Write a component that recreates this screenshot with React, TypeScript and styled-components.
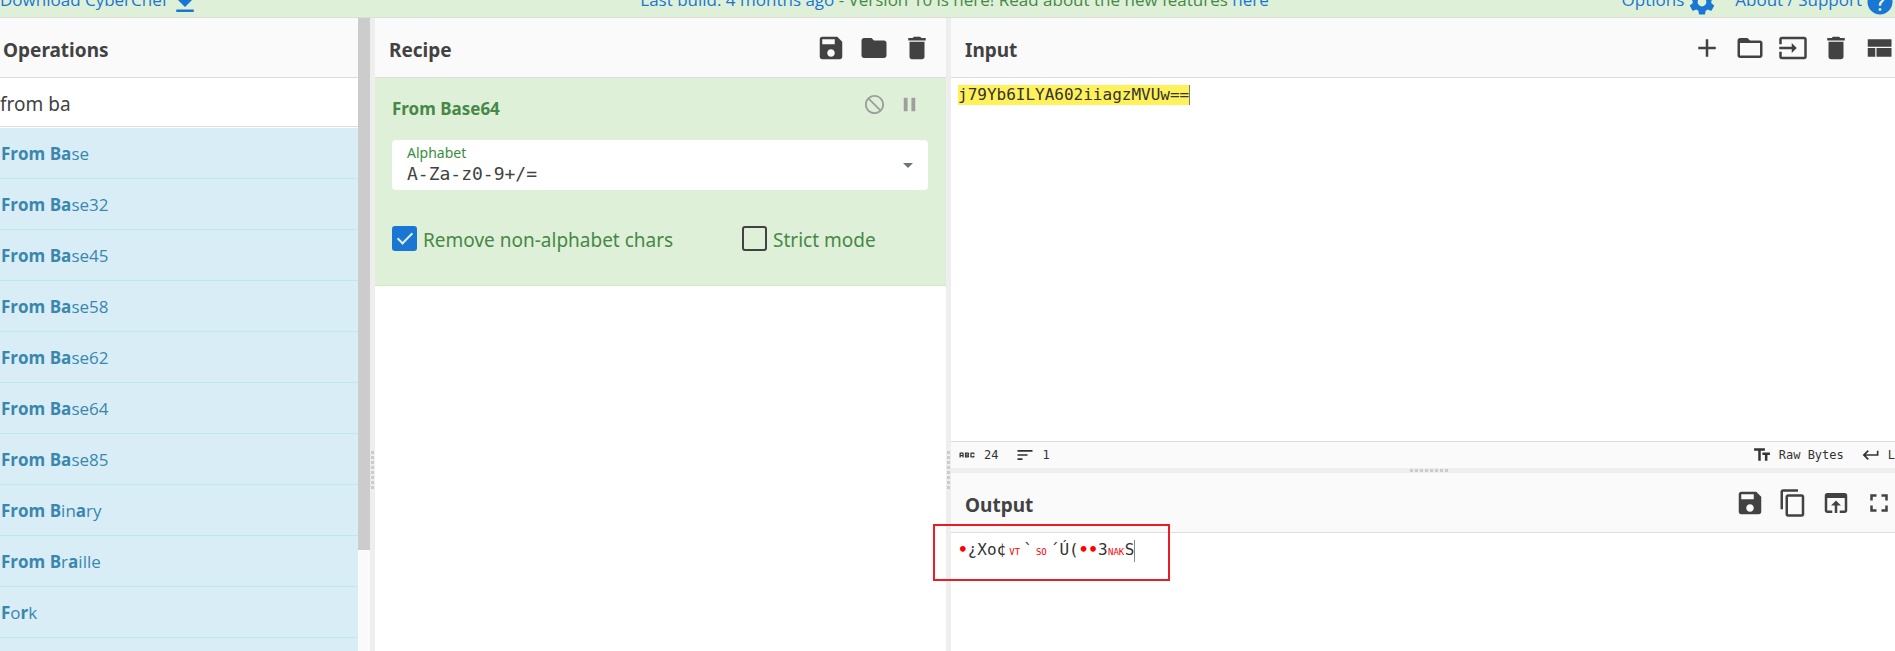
import React from "react";
import styled, { createGlobalStyle } from "styled-components";
import { MdAbc, MdTextFields } from "react-icons/md";

const SANS = `"Noto Sans", "Open Sans", sans-serif`;
const MONO = `"DejaVu Sans Mono", "Liberation Mono", monospace`;

const GlobalStyle = createGlobalStyle`
  *, *::before, *::after { box-sizing: border-box; }
  body { margin: 0; font-family: ${SANS}; color: #424242; background: #fff; }
  button, input, select { font: inherit; color: inherit; margin: 0; }
  a { color: #1976d2; text-decoration: none; }
`;

const PATHS = {
  download: "M19 9h-4V3H9v6H5l7 7 7-7zM5 18v2h14v-2z",
  settings:
    "M19.43 12.98c.04-.32.07-.64.07-.98s-.03-.66-.07-.98l2.11-1.65c.19-.15.24-.42.12-.64l-2-3.46c-.12-.22-.39-.3-.61-.22l-2.49 1c-.52-.4-1.08-.73-1.69-.98l-.38-2.65C14.46 2.18 14.25 2 14 2h-4c-.25 0-.46.18-.49.42l-.38 2.65c-.61.25-1.17.59-1.69.98l-2.49-1c-.23-.09-.49 0-.61.22l-2 3.46c-.13.22-.07.49.12.64l2.11 1.65c-.04.32-.07.65-.07.98s.03.66.07.98l-2.11 1.65c-.19.15-.24.42-.12.64l2 3.46c.12.22.39.3.61.22l2.49-1c.52.4 1.08.73 1.69.98l.38 2.65c.03.24.24.42.49.42h4c.25 0 .46-.18.49-.42l.38-2.65c.61-.25 1.17-.59 1.69-.98l2.49 1c.23.09.49 0 .61-.22l2-3.46c.12-.22.07-.49-.12-.64l-2.11-1.65zM12 15.5c-1.93 0-3.5-1.57-3.5-3.5s1.57-3.5 3.5-3.5 3.5 1.57 3.5 3.5-1.57 3.5-3.5 3.5z",
  help: "M12 2C6.48 2 2 6.48 2 12s4.48 10 10 10 10-4.48 10-10S17.52 2 12 2zm1 17h-2v-2h2v2zm2.07-7.75l-.9.92C13.45 12.9 13 13.5 13 15h-2v-.5c0-1.1.45-2.1 1.17-2.83l1.24-1.26c.37-.36.59-.86.59-1.41 0-1.1-.9-2-2-2s-2 .9-2 2H8c0-2.21 1.79-4 4-4s4 1.79 4 4c0 .88-.36 1.68-.93 2.25z",
  save: "M17 3H5c-1.11 0-2 .9-2 2v14c0 1.1.89 2 2 2h14c1.1 0 2-.9 2-2V7l-4-4zm-5 16c-1.66 0-3-1.34-3-3s1.34-3 3-3 3 1.34 3 3-1.34 3-3 3zm3-10H5V5h10v4z",
  folder:
    "M10 4H4c-1.1 0-1.99.9-1.99 2L2 18c0 1.1.9 2 2 2h16c1.1 0 2-.9 2-2V8c0-1.1-.9-2-2-2h-8l-2-2z",
  trash:
    "M6 19c0 1.1.9 2 2 2h8c1.1 0 2-.9 2-2V7H6v12zM19 4h-3.5l-1-1h-5l-1 1H5v2h14V4z",
  add: "M19 13h-6v6h-2v-6H5v-2h6V5h2v6h6v2z",
  folderOpen:
    "M20 6h-8l-2-2H4c-1.1 0-1.99.9-1.99 2L2 18c0 1.1.9 2 2 2h16c1.1 0 2-.9 2-2V8c0-1.1-.9-2-2-2zm0 12H4V8h16v10z",
  input:
    "M21 3.01H3c-1.1 0-2 .9-2 2V9h2V4.99h18v14.03H3V15H1v4.01c0 1.1.9 1.98 2 1.98h18c1.1 0 2-.88 2-1.98v-14c0-1.11-.9-2-2-2zM11 16l4-4-4-4v3H1v2h10v3z",
  layout: "M3 19h6v-7H3v7zm7 0h12v-7H10v7zM3 5v6h19V5H3z",
  copy: "M16 1H4c-1.1 0-2 .9-2 2v14h2V3h12V1zm3 4H8c-1.1 0-2 .9-2 2v14c0 1.1.9 2 2 2h11c1.1 0 2-.9 2-2V7c0-1.1-.9-2-2-2zm0 16H8V7h11v14z",
  openIn:
    "M19 4H5c-1.11 0-2 .9-2 2v12c0 1.1.89 2 2 2h4v-2H5V8h14v10h-4v2h4c1.1 0 2-.9 2-2V6c0-1.1-.89-2-2-2zm-7 6l-4 4h3v6h2v-6h3l-4-4z",
  fullscreen:
    "M7 14H5v5h5v-2H7v-3zm-2-4h2V7h3V5H5v5zm12 7h-3v2h5v-5h-2v3zM14 5v2h3v3h2V5h-5z",
  disable:
    "M12 2C6.48 2 2 6.48 2 12s4.48 10 10 10 10-4.48 10-10S17.52 2 12 2zm0 18c-4.42 0-8-3.58-8-8 0-1.85.63-3.55 1.69-4.9L16.9 18.31C15.55 19.37 13.85 20 12 20zm6.31-3.1L7.1 5.69C8.45 4.63 10.15 4 12 4c4.42 0 8 3.58 8 8 0 1.85-.63 3.55-1.69 4.9z",
  pause: "M6 19h4V5H6v14zm8-14v14h4V5h-4z",
  lines: "M3 18h6v-2H3v2zM3 6v2h18V6H3zm0 7h12v-2H3v2z",
  enter: "M19 7v4H5.83l3.58-3.59L8 6l-6 6 6 6 1.41-1.41L5.83 13H21V7z",
};
type IconName = keyof typeof PATHS;

const Svg = styled.svg`
  display: block;
  flex: none;
  fill: currentColor;
`;
const Icon = ({ name, size = 30 }: { name: IconName; size?: number }) => (
  <Svg width={size} height={size} viewBox="0 0 24 24" aria-hidden="true">
    <path d={PATHS[name]} />
  </Svg>
);

const Page = styled.div`
  display: flex;
  flex-direction: column;
  height: 100vh;
  overflow: hidden;
`;

const Banner = styled.header`
  display: grid;
  grid-template-columns: 1fr auto 1fr;
  grid-template-rows: 17px;
  align-items: end;
  flex: none;
  overflow: hidden;
  background: #dff0d8;
  border-bottom: 1px solid #ddd;
  color: #468847;
  font-family: "Open Sans", "Noto Sans", sans-serif;
  font-size: 17px;
  line-height: 20px;
  white-space: nowrap;
`;
const BannerLink = styled.a`
  display: flex;
  align-items: flex-end;
  gap: 3px;
`;
const BannerText = styled.span`
  padding-bottom: 7px;
`;
const BannerNotice = styled(BannerText)`
  padding-left: 14px;
`;
const BannerEnd = styled.div`
  display: flex;
  justify-content: flex-end;
  gap: 18px;
`;

const Workspace = styled.main`
  flex: 1;
  min-height: 0;
  display: grid;
  grid-template-columns:
    minmax(0, 358fr) 12px 5px minmax(0, 571fr) 5px
    minmax(0, 944fr);
`;

const Pane = styled.section<{ $grow?: number }>`
  display: flex;
  flex-direction: column;
  flex: ${(p) => p.$grow ?? 1} 1 0;
  min-width: 0;
  min-height: 0;
`;
const ClippedPane = styled(Pane)`
  overflow: hidden;
`;
const PaneHeader = styled.div<{ $left: number; $right: number }>`
  display: flex;
  align-items: center;
  justify-content: space-between;
  flex: none;
  height: 60px;
  padding: 0 ${(p) => p.$right}px 0 ${(p) => p.$left}px;
  background: #fafafa;
  border-bottom: 1px solid #ddd;
`;
const PaneTitle = styled.h2`
  margin: 0;
  padding-top: 4px;
  font-size: 19px;
  line-height: 24px;
  font-weight: 700;
`;
const Tools = styled.div<{ $gap: number }>`
  display: flex;
  gap: ${(p) => p.$gap}px;
`;
const IconButton = styled.button<{ $tone?: string }>`
  padding: 0;
  border: 0;
  background: none;
  color: ${(p) => p.$tone ?? "#424242"};
  cursor: pointer;
`;

const Search = styled.input`
  flex: none;
  width: 100%;
  height: 49px;
  padding: 4px 0 0;
  border: 0;
  border-bottom: 1px solid #ddd;
  outline: 0;
  background: #fff;
  font-size: 19px;
`;
const OperationList = styled.ul`
  margin: 1px 0 0;
  padding: 0;
  list-style: none;
`;
const Operation = styled.li`
  height: 51px;
  padding: 0 1px;
  background: #d9edf7;
  border-bottom: 1px solid #bce8f1;
  color: #3a87ad;
  font-family: "Open Sans", "Noto Sans", sans-serif;
  font-size: 17px;
  line-height: 52px;
  white-space: nowrap;
`;

const ScrollTrack = styled.div`
  background: #fafafa;
`;
const ScrollThumb = styled.div`
  height: 84%;
  background: #ccc;
`;

const Gutter = styled.div<{ $horizontal?: boolean }>`
  display: flex;
  flex: none;
  flex-direction: ${(p) => (p.$horizontal ? "row" : "column")};
  align-items: center;
  justify-content: ${(p) => (p.$horizontal ? "center" : "flex-start")};
  gap: 2px;
  min-height: 5px;
  padding: ${(p) => (p.$horizontal ? "0 0 0 12px" : "433px 0 0")};
  background: #eee;
`;
const Dot = styled.i`
  width: 3px;
  height: 3px;
  background: #ccc;
`;
const Divider = ({ horizontal }: { horizontal?: boolean }) => (
  <Gutter $horizontal={horizontal}>
    {Array.from({ length: 8 }, (_, i) => (
      <Dot key={i} />
    ))}
  </Gutter>
);

const RecipeCard = styled.article`
  display: flex;
  flex-direction: column;
  height: 208px;
  padding: 15px 18px 0 17px;
  background: #dff0d8;
  border-bottom: 1px solid #d0e9c0;
  color: #468847;
`;
const CardHead = styled.div`
  display: flex;
  align-items: flex-start;
  justify-content: space-between;
  height: 47px;
  padding-right: 7px;
`;
const CardTitle = styled.h3`
  margin: 0;
  padding-top: 4px;
  font-size: 17px;
  line-height: 24px;
`;
const Field = styled.div`
  display: flex;
  align-items: center;
  height: 50px;
  padding: 0 15px;
  background: #fff;
  border-radius: 4px;
`;
const FieldMain = styled.div`
  flex: 1;
  display: flex;
  flex-direction: column;
  padding-bottom: 3px;
`;
const FieldLabel = styled.label`
  font-size: 14px;
  line-height: 20px;
  color: #388e3c;
`;
const Select = styled.select`
  appearance: none;
  width: 100%;
  height: 21px;
  padding: 0;
  border: 0;
  outline: 0;
  background: transparent;
  color: #424242;
  font-family: ${MONO};
  font-size: 18px;
  line-height: 21px;
`;
const Checks = styled.div`
  display: grid;
  grid-template-columns: 350px 1fr;
  padding-top: 36px;
`;
const CheckLabel = styled.label`
  display: flex;
  align-items: flex-start;
  gap: 6px;
  font-size: 19px;
  line-height: 28px;
  white-space: nowrap;
`;
const Checkbox = styled.input`
  appearance: none;
  display: grid;
  place-items: center;
  width: 25px;
  height: 25px;
  border: 2px solid #424242;
  border-radius: 3px;
  &:checked {
    background: #1976d2;
    border-color: #1976d2;
  }
  &:checked::after {
    content: "";
    width: 8px;
    height: 15px;
    margin-bottom: 5px;
    border: solid #dff0d8;
    border-width: 0 2px 2px 0;
    transform: rotate(45deg);
  }
`;

const Code = styled.div`
  flex: 1;
  min-height: 0;
  padding: 7px;
  background: #fff;
  color: #333;
  font-family: ${MONO};
  font-size: 16px;
  line-height: 20px;
  white-space: pre;
`;
const Highlight = styled.mark`
  display: inline-block;
  background: #fff159;
  color: inherit;
  border-right: 1px solid #777;
`;
const OutputLine = styled.span`
  display: inline-block;
  border-right: 1px solid #888;
`;
const Control = styled.span`
  color: #f00;
  font-weight: 700;
`;
const ControlName = styled(Control)`
  display: inline-block;
  width: 17px;
  font-size: 9px;
  font-weight: 400;
  text-align: center;
`;

const StatusBar = styled.div`
  display: flex;
  align-items: center;
  justify-content: space-between;
  flex: none;
  height: 27px;
  padding: 0 0 0 6px;
  background: #fafafa;
  border-top: 1px solid #ddd;
  color: #333;
  font-family: ${MONO};
  font-size: 12px;
  line-height: 16px;
`;
const StatusGroup = styled.div`
  display: flex;
  gap: 17px;
`;
const StatusItem = styled.span`
  display: flex;
  align-items: center;
  gap: 7px;
`;

const OutputPane = styled(Pane)`
  position: relative;
`;
const Marker = styled.div`
  position: absolute;
  left: -18px;
  top: 51px;
  width: 237px;
  height: 57px;
  border: 2px solid #ed1c24;
`;

// Asterisks wrap the characters matched by the search box.
const OPERATIONS = [
  "*From Ba*se",
  "*From Ba*se32",
  "*From Ba*se45",
  "*From Ba*se58",
  "*From Ba*se62",
  "*From Ba*se64",
  "*From Ba*se85",
  "*From B*in*a*ry",
  "*From B*r*a*ille",
  "*F*o*r*k",
];

const Toolbar = ({ items }: { items: [IconName, string][] }) => (
  <Tools $gap={13}>
    {items.map(([name, label]) => (
      <IconButton key={label} type="button" aria-label={label}>
        <Icon name={name} />
      </IconButton>
    ))}
  </Tools>
);

export default function App() {
  return (
    <Page>
      <GlobalStyle />
      <Banner>
        <BannerLink href="#download">
          <BannerText>Download CyberChef</BannerText>
          <Icon name="download" />
        </BannerLink>
        <BannerNotice>
          <a href="#build">Last build: 4 months ago</a> - Version 10 is here!
          Read about the new features <a href="#features">here</a>
        </BannerNotice>
        <BannerEnd>
          <BannerLink href="#options">
            <BannerText>Options</BannerText>
            <Icon name="settings" />
          </BannerLink>
          <BannerLink href="#about">
            <BannerText>About / Support</BannerText>
            <Icon name="help" />
          </BannerLink>
        </BannerEnd>
      </Banner>

      <Workspace>
        <ClippedPane>
          <PaneHeader $left={3} $right={15}>
            <PaneTitle>Operations</PaneTitle>
          </PaneHeader>
          <Search
            type="text"
            aria-label="Search operations"
            defaultValue="from ba"
          />
          <OperationList>
            {OPERATIONS.map((op) => (
              <Operation key={op}>
                {op
                  .split("*")
                  .map((part, i) =>
                    i % 2 ? <b key={i}>{part}</b> : part
                  )}
              </Operation>
            ))}
            <Operation />
          </OperationList>
        </ClippedPane>
        <ScrollTrack>
          <ScrollThumb />
        </ScrollTrack>
        <Divider />

        <Pane>
          <PaneHeader $left={14} $right={14}>
            <PaneTitle>Recipe</PaneTitle>
            <Toolbar
              items={[
                ["save", "Save recipe"],
                ["folder", "Load recipe"],
                ["trash", "Clear recipe"],
              ]}
            />
          </PaneHeader>
          <RecipeCard>
            <CardHead>
              <CardTitle>From Base64</CardTitle>
              <Tools $gap={12}>
                <IconButton
                  type="button"
                  aria-label="Disable operation"
                  $tone="#9e9e9e"
                >
                  <Icon name="disable" size={23} />
                </IconButton>
                <IconButton
                  type="button"
                  aria-label="Set breakpoint"
                  $tone="#9e9e9e"
                >
                  <Icon name="pause" size={23} />
                </IconButton>
              </Tools>
            </CardHead>
            <Field>
              <FieldMain>
                <FieldLabel htmlFor="alphabet">Alphabet</FieldLabel>
                <Select id="alphabet">
                  <option>A-Za-z0-9+/=</option>
                </Select>
              </FieldMain>
              <Svg width="10" height="5" viewBox="0 0 10 5" color="#6c757d">
                <path d="M0 0h10L5 5z" />
              </Svg>
            </Field>
            <Checks>
              <CheckLabel>
                <Checkbox type="checkbox" defaultChecked />
                Remove non-alphabet chars
              </CheckLabel>
              <CheckLabel>
                <Checkbox type="checkbox" />
                Strict mode
              </CheckLabel>
            </Checks>
          </RecipeCard>
        </Pane>
        <Divider />

        <Pane>
          <Pane $grow={450}>
            <PaneHeader $left={14} $right={1}>
              <PaneTitle>Input</PaneTitle>
              <Toolbar
                items={[
                  ["add", "Add input tab"],
                  ["folderOpen", "Open folder"],
                  ["input", "Open file"],
                  ["trash", "Clear input"],
                  ["layout", "Reset layout"],
                ]}
              />
            </PaneHeader>
            <Code>
              <Highlight>j79Yb6ILYA602iiagzMVUw==</Highlight>
            </Code>
            <StatusBar>
              <StatusGroup>
                <StatusItem>
                  <MdAbc size={20} />
                  24
                </StatusItem>
                <StatusItem>
                  <Icon name="lines" size={20} />1
                </StatusItem>
              </StatusGroup>
              <StatusGroup>
                <StatusItem>
                  <MdTextFields size={20} />
                  Raw Bytes
                </StatusItem>
                <StatusItem>
                  <Icon name="enter" size={20} />L
                </StatusItem>
              </StatusGroup>
            </StatusBar>
          </Pane>
          <Divider horizontal />
          <OutputPane $grow={178}>
            <PaneHeader $left={14} $right={1}>
              <PaneTitle>Output</PaneTitle>
              <Toolbar
                items={[
                  ["save", "Save output"],
                  ["copy", "Copy output"],
                  ["openIn", "Replace input with output"],
                  ["fullscreen", "Maximise output"],
                ]}
              />
            </PaneHeader>
            <Code>
              <OutputLine>
                <Control>•</Control>¿Xo¢<ControlName>VT</ControlName>`
                <ControlName>SO</ControlName>´Ú(<Control>••</Control>3
                <ControlName>NAK</ControlName>S
              </OutputLine>
            </Code>
            <Marker />
          </OutputPane>
        </Pane>
      </Workspace>
    </Page>
  );
}
